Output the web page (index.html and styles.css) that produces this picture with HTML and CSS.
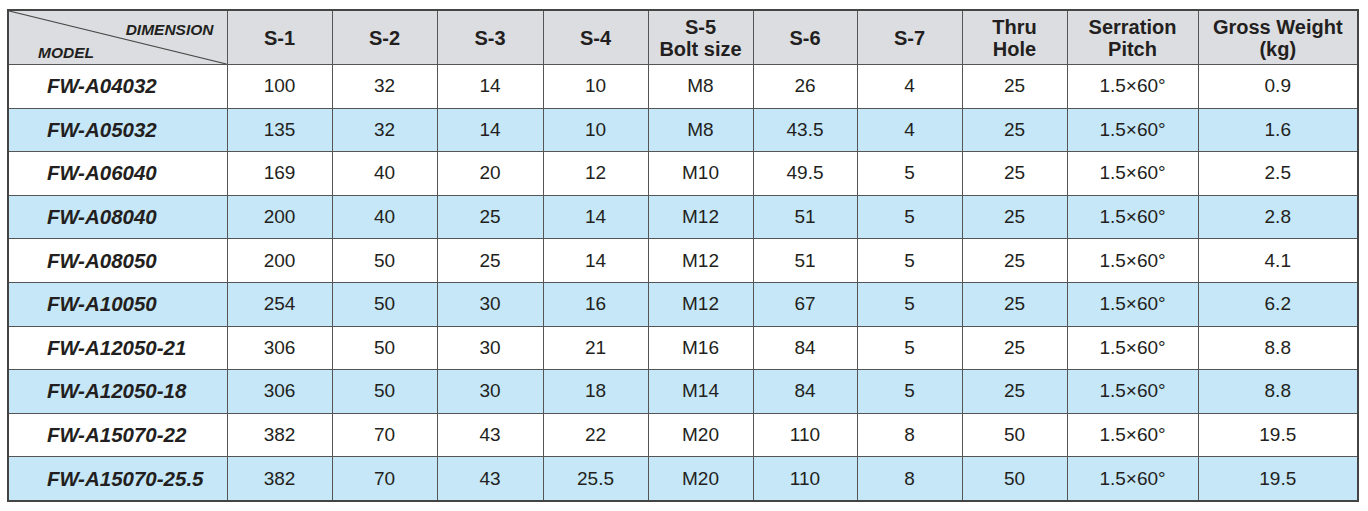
FILE: index.html
```html
<!DOCTYPE html>
<html>
<head>
<meta charset="utf-8">
<link rel="stylesheet" href="styles.css">
</head>
<body>
<div class="wrap">
<table class="spec">
  <colgroup>
    <col class="c-model"><col class="c-n"><col class="c-n"><col class="c-n3"><col class="c-n"><col class="c-n"><col class="c-n6"><col class="c-n"><col class="c-n"><col class="c-ser"><col class="c-gw">
  </colgroup>
  <thead>
    <tr>
      <th class="corner">
        <svg class="diag" viewBox="0 0 100 100" preserveAspectRatio="none"><line x1="0" y1="0" x2="100" y2="100" stroke="#4a4a4a" stroke-width="1.2" vector-effect="non-scaling-stroke"/></svg>
        <span class="dim">DIMENSION</span>
        <span class="mod">MODEL</span>
      </th>
      <th>S-1</th><th>S-2</th><th>S-3</th><th>S-4</th><th>S-5<br>Bolt size</th><th>S-6</th><th>S-7</th><th>Thru<br>Hole</th><th>Serration<br>Pitch</th><th>Gross Weight<br>(kg)</th>
    </tr>
  </thead>
  <tbody>
    <tr><td class="m">FW-A04032</td><td>100</td><td>32</td><td>14</td><td>10</td><td>M8</td><td>26</td><td>4</td><td>25</td><td>1.5×60°</td><td>0.9</td></tr>
    <tr class="alt"><td class="m">FW-A05032</td><td>135</td><td>32</td><td>14</td><td>10</td><td>M8</td><td>43.5</td><td>4</td><td>25</td><td>1.5×60°</td><td>1.6</td></tr>
    <tr><td class="m">FW-A06040</td><td>169</td><td>40</td><td>20</td><td>12</td><td>M10</td><td>49.5</td><td>5</td><td>25</td><td>1.5×60°</td><td>2.5</td></tr>
    <tr class="alt"><td class="m">FW-A08040</td><td>200</td><td>40</td><td>25</td><td>14</td><td>M12</td><td>51</td><td>5</td><td>25</td><td>1.5×60°</td><td>2.8</td></tr>
    <tr><td class="m">FW-A08050</td><td>200</td><td>50</td><td>25</td><td>14</td><td>M12</td><td>51</td><td>5</td><td>25</td><td>1.5×60°</td><td>4.1</td></tr>
    <tr class="alt"><td class="m">FW-A10050</td><td>254</td><td>50</td><td>30</td><td>16</td><td>M12</td><td>67</td><td>5</td><td>25</td><td>1.5×60°</td><td>6.2</td></tr>
    <tr><td class="m">FW-A12050-21</td><td>306</td><td>50</td><td>30</td><td>21</td><td>M16</td><td>84</td><td>5</td><td>25</td><td>1.5×60°</td><td>8.8</td></tr>
    <tr class="alt"><td class="m">FW-A12050-18</td><td>306</td><td>50</td><td>30</td><td>18</td><td>M14</td><td>84</td><td>5</td><td>25</td><td>1.5×60°</td><td>8.8</td></tr>
    <tr><td class="m">FW-A15070-22</td><td>382</td><td>70</td><td>43</td><td>22</td><td>M20</td><td>110</td><td>8</td><td>50</td><td>1.5×60°</td><td>19.5</td></tr>
    <tr class="alt"><td class="m">FW-A15070-25.5</td><td>382</td><td>70</td><td>43</td><td>25.5</td><td>M20</td><td>110</td><td>8</td><td>50</td><td>1.5×60°</td><td>19.5</td></tr>
  </tbody>
</table>
</div>
</body>
</html>
```

FILE: styles.css
```css
html, body {
  margin: 0;
  padding: 0;
  background: #ffffff;
}
.wrap {
  padding: 9px 0 0 7px;
}
.spec {
  border-collapse: collapse;
  table-layout: fixed;
  width: 1351px;
  border: 2px solid #444;
  font-family: "Liberation Sans", Arial, sans-serif;
  color: #231f20;
}
.c-model { width: 219px; }
.c-n { width: 105px; }
.c-n3 { width: 106px; }
.c-n6 { width: 104px; }
.c-ser { width: 131px; }
.c-gw { width: 160px; }

.spec th, .spec td {
  border: 1px solid #555;
  padding: 0;
  text-align: center;
  vertical-align: middle;
}
.spec th {
  background: #dcdde0;
  height: 53px;
  font-size: 20px;
  line-height: 22px;
  font-weight: bold;
}
.spec td {
  height: 42.6px;
  font-size: 19px;
  line-height: 20px;
}
.spec tr.alt td {
  background: #c6e7f8;
}
.spec td.m {
  text-align: left;
  padding-left: 38px;
  font-weight: bold;
  font-style: italic;
  font-size: 20.5px;
}
.corner {
  position: relative;
  text-align: left;
}
.diag {
  position: absolute;
  left: 0;
  top: 0;
  width: 100%;
  height: 100%;
}
.dim, .mod {
  position: absolute;
  font-size: 15.5px;
  line-height: 16px;
  font-style: italic;
  font-weight: bold;
}
.dim {
  right: 13px;
  top: 11px;
}
.mod {
  left: 29px;
  top: 34px;
}
```
